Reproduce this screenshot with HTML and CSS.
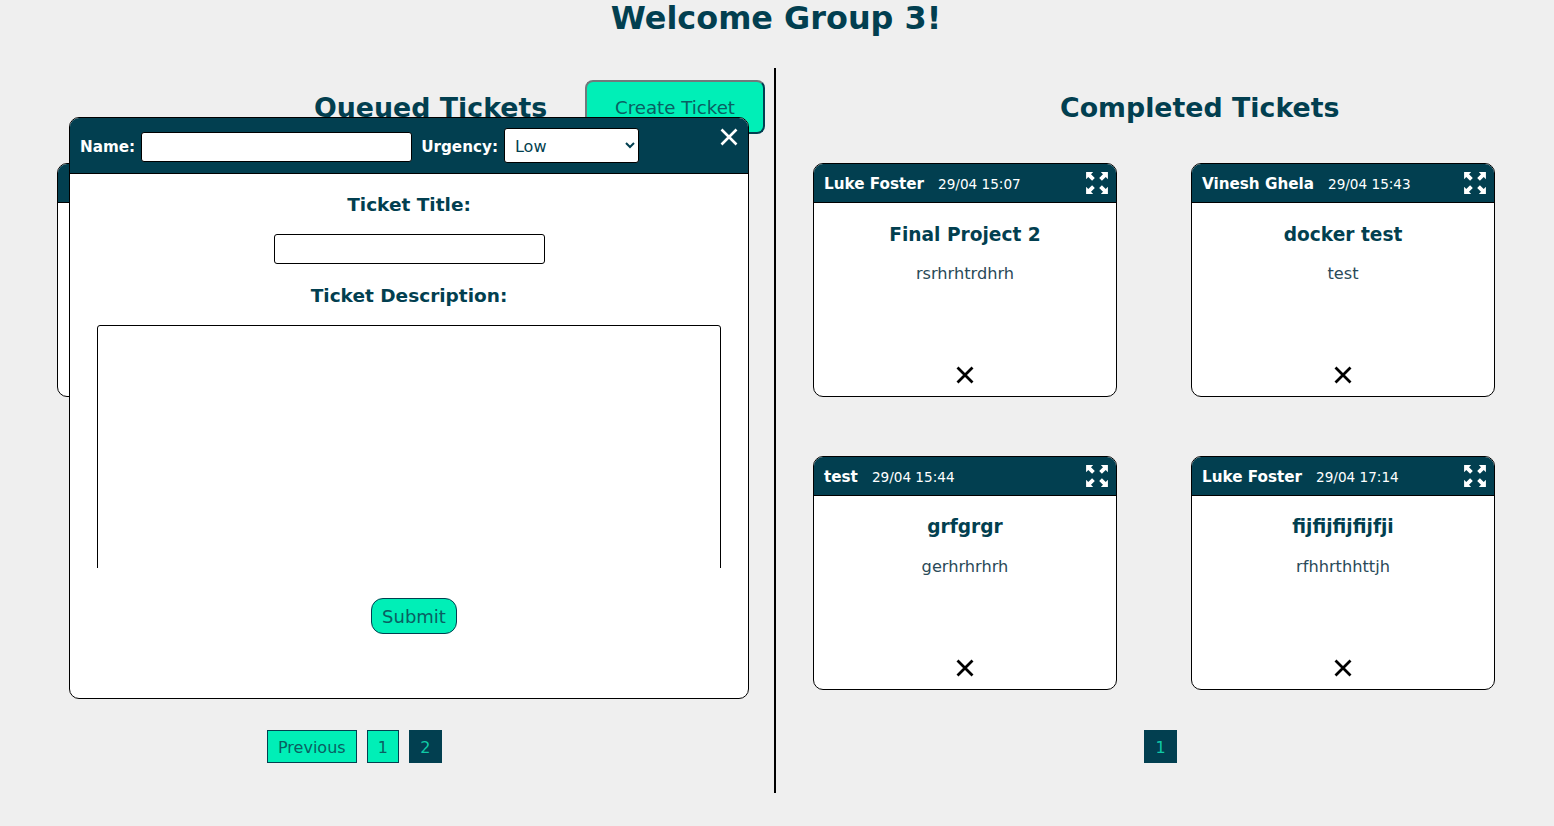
FILE: index.html
```html
<!DOCTYPE html>
<html lang="en">
<head>
    <meta charset="UTF-8">
    <title>Tickets</title>
    <link rel="stylesheet" href="styles.css">
</head>
<body>
    <h1 class="welcome">Welcome Group 3!</h1>

    <div class="board">
        <section class="column queued">
            <div class="column-head">
                <h2>Queued Tickets</h2>
                <button class="create-btn">Create Ticket</button>
            </div>
            <div class="ticket-grid">
                <div class="ticket">
                    <div class="ticket-head"></div>
                </div>
            </div>
            <div class="pager pager-left">
                <button class="page-btn">Previous</button>
                <button class="page-btn">1</button>
                <button class="page-btn active">2</button>
            </div>

            <form class="modal">
                <div class="modal-head">
                    <label for="name">Name:</label>
                    <input id="name" class="name-input" type="text">
                    <label for="urgency">Urgency:</label>
                    <select id="urgency" class="urgency-select">
                        <option>Low</option>
                    </select>
                    <svg class="modal-close" viewBox="0 0 18 18"><path d="M1.5 1.5 16.5 16.5M16.5 1.5 1.5 16.5"/></svg>
                </div>
                <div class="modal-body">
                    <label class="field-label" for="title">Ticket Title:</label>
                    <input id="title" class="title-input" type="text">
                    <label class="field-label desc-label" for="desc">Ticket Description:</label>
                    <div class="desc-clip">
                        <textarea id="desc" class="desc-input"></textarea>
                    </div>
                    <button class="submit-btn" type="button">Submit</button>
                </div>
            </form>
        </section>

        <section class="column completed">
            <div class="column-head">
                <h2>Completed Tickets</h2>
            </div>
            <div class="ticket-grid">
                <div class="ticket">
                    <div class="ticket-head">
                        <span class="author">Luke Foster</span>
                        <span class="stamp">29/04 15:07</span>
                        <svg class="expand" viewBox="0 0 22 22"><path d="M1 7.5V1H7.5L5.5 3 9 6.5 6.5 9 3 5.5ZM21 7.5V1H14.5L16.5 3 13 6.5 15.5 9 19 5.5ZM1 14.5V21H7.5L5.5 19 9 15.5 6.5 13 3 16.5ZM21 14.5V21H14.5L16.5 19 13 15.5 15.5 13 19 16.5Z"/></svg>
                    </div>
                    <h3>Final Project 2</h3>
                    <p>rsrhrhtrdhrh</p>
                    <svg class="remove" viewBox="0 0 18 18"><path d="M1.5 1.5 16.5 16.5M16.5 1.5 1.5 16.5"/></svg>
                </div>
                <div class="ticket">
                    <div class="ticket-head">
                        <span class="author">Vinesh Ghela</span>
                        <span class="stamp">29/04 15:43</span>
                        <svg class="expand" viewBox="0 0 22 22"><path d="M1 7.5V1H7.5L5.5 3 9 6.5 6.5 9 3 5.5ZM21 7.5V1H14.5L16.5 3 13 6.5 15.5 9 19 5.5ZM1 14.5V21H7.5L5.5 19 9 15.5 6.5 13 3 16.5ZM21 14.5V21H14.5L16.5 19 13 15.5 15.5 13 19 16.5Z"/></svg>
                    </div>
                    <h3>docker test</h3>
                    <p>test</p>
                    <svg class="remove" viewBox="0 0 18 18"><path d="M1.5 1.5 16.5 16.5M16.5 1.5 1.5 16.5"/></svg>
                </div>
                <div class="ticket">
                    <div class="ticket-head">
                        <span class="author">test</span>
                        <span class="stamp">29/04 15:44</span>
                        <svg class="expand" viewBox="0 0 22 22"><path d="M1 7.5V1H7.5L5.5 3 9 6.5 6.5 9 3 5.5ZM21 7.5V1H14.5L16.5 3 13 6.5 15.5 9 19 5.5ZM1 14.5V21H7.5L5.5 19 9 15.5 6.5 13 3 16.5ZM21 14.5V21H14.5L16.5 19 13 15.5 15.5 13 19 16.5Z"/></svg>
                    </div>
                    <h3>grfgrgr</h3>
                    <p>gerhrhrhrh</p>
                    <svg class="remove" viewBox="0 0 18 18"><path d="M1.5 1.5 16.5 16.5M16.5 1.5 1.5 16.5"/></svg>
                </div>
                <div class="ticket">
                    <div class="ticket-head">
                        <span class="author">Luke Foster</span>
                        <span class="stamp">29/04 17:14</span>
                        <svg class="expand" viewBox="0 0 22 22"><path d="M1 7.5V1H7.5L5.5 3 9 6.5 6.5 9 3 5.5ZM21 7.5V1H14.5L16.5 3 13 6.5 15.5 9 19 5.5ZM1 14.5V21H7.5L5.5 19 9 15.5 6.5 13 3 16.5ZM21 14.5V21H14.5L16.5 19 13 15.5 15.5 13 19 16.5Z"/></svg>
                    </div>
                    <h3>fijfijfijfijfji</h3>
                    <p>rfhhrthhttjh</p>
                    <svg class="remove" viewBox="0 0 18 18"><path d="M1.5 1.5 16.5 16.5M16.5 1.5 1.5 16.5"/></svg>
                </div>
            </div>
            <div class="pager pager-right">
                <button class="page-btn active">1</button>
            </div>
        </section>
    </div>
</body>
</html>
```

FILE: styles.css
```css
* {
    margin: 0;
    padding: 0;
    box-sizing: border-box;
}

body {
    font-family: "DejaVu Sans", Verdana, sans-serif;
    background: #efefef;
    color: #023f50;
    height: 826px;
    overflow: hidden;
}

.welcome {
    font-size: 31.9px;
    line-height: 37px;
    padding-right: 2px;
    text-align: center;
}

.board {
    display: flex;
    margin-top: 31px;
    height: 725px;
}

.column {
    position: relative;
    width: 774px;
}

.completed {
    flex: 1;
    border-left: 2px solid #000;
    padding-left: 37px;
}

.queued {
    padding-left: 57px;
}

.column-head {
    height: 95px;
    padding-top: 21px;
}

.column-head h2 {
    font-size: 26.8px;
    line-height: 37px;
}

.queued .column-head h2 {
    padding-left: 257px;
}

.completed .column-head h2 {
    padding-left: 247px;
}

.create-btn {
    position: absolute;
    left: 585px;
    top: 12px;
    width: 180px;
    height: 54px;
    background: #00efb7;
    color: #0a5f62;
    border: 2px solid;
    border-color: #707a7c #023f50 #023f50 #707a7c;
    border-radius: 8px;
    font-family: inherit;
    font-size: 18.2px;
}

.ticket-grid {
    display: grid;
    grid-template-columns: 304px 304px;
    grid-auto-rows: 234px;
    column-gap: 74px;
    row-gap: 58.6px;
    height: 527px;
}

.ticket {
    position: relative;
    background: #fff;
    border: 1px solid #000;
    border-radius: 10px;
    text-align: center;
    overflow: hidden;
}

.ticket-head {
    display: flex;
    align-items: center;
    height: 39px;
    padding: 2px 7px 0 10px;
    background: #023f50;
    border-bottom: 1px solid #000;
    color: #fff;
}

.author {
    font-size: 15.2px;
    font-weight: bold;
    margin-right: 14px;
}

.stamp {
    font-size: 13.6px;
}

.expand {
    width: 24px;
    height: 24px;
    margin-left: auto;
    margin-top: -2px;
    fill: #fff;
}

.ticket h3 {
    font-size: 18.6px;
    line-height: 24px;
    margin-top: 19.6px;
}

.ticket p {
    font-size: 16.2px;
    line-height: 20px;
    margin-top: 17.4px;
    color: #2a4a58;
}

.remove {
    position: absolute;
    left: 142px;
    bottom: 12px;
    width: 18px;
    height: 18px;
}

.remove path {
    stroke: #000;
    stroke-width: 2.8;
    fill: none;
}

.pager {
    display: flex;
    gap: 10px;
    margin-top: 40px;
}

.pager-left {
    padding-left: 210px;
}

.pager-right {
    padding-left: 331px;
}

.page-btn {
    height: 33px;
    padding: 1px 10px 0;
    min-width: 32px;
    background: #00efb7;
    color: #0a5f62;
    border: 1px solid #023f50;
    font-family: inherit;
    font-size: 16px;
}

.page-btn.active {
    min-width: 33px;
    background: #023f50;
    color: #10c9a6;
}

.modal {
    position: absolute;
    left: 69px;
    top: 49px;
    width: 680px;
    height: 582px;
    background: #fff;
    border: 1px solid #000;
    border-radius: 10px;
    overflow: hidden;
}

.modal-head {
    position: relative;
    display: flex;
    align-items: center;
    gap: 6px;
    height: 56px;
    padding: 3px 0 0 10px;
    background: #023f50;
    border-bottom: 1px solid #000;
    color: #fff;
    font-size: 15.2px;
    font-weight: bold;
}

.name-input {
    width: 271px;
    height: 30px;
    margin-right: 3px;
    border: 1px solid #000;
    border-radius: 3px;
}

.urgency-select {
    width: 135px;
    height: 35px;
    margin-top: -3px;
    padding: 2px 0 0 6px;
    background: #fff;
    border: 1px solid #000;
    border-radius: 3px;
    font-family: inherit;
    font-size: 16px;
    color: #023f50;
}

.modal-close {
    position: absolute;
    right: 10px;
    top: 10px;
    width: 18px;
    height: 18px;
}

.modal-close path {
    stroke: #fff;
    stroke-width: 2.6;
    fill: none;
}

.modal-body {
    display: flex;
    flex-direction: column;
    align-items: center;
}

.field-label {
    font-size: 18.5px;
    font-weight: bold;
    line-height: 24px;
    margin-top: 19px;
}

.title-input {
    width: 271px;
    height: 30px;
    margin-top: 17px;
    border: 1px solid #000;
    border-radius: 3px;
}

.desc-label {
    margin-top: 20px;
}

.desc-clip {
    width: 624px;
    height: 243px;
    margin-top: 17px;
    overflow: hidden;
}

.desc-input {
    display: block;
    width: 624px;
    height: 300px;
    border: 1px solid #000;
    border-radius: 3px;
    resize: none;
}

.submit-btn {
    width: 86px;
    height: 36px;
    margin: 30px 0 0 10px;
    background: #00efb7;
    color: #0a5f62;
    border: 1px solid #023f50;
    border-radius: 12px;
    font-family: inherit;
    font-size: 18px;
}
```
